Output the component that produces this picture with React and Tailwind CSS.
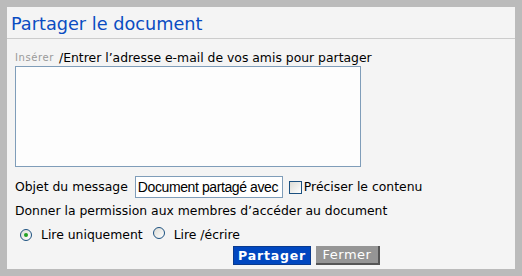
import React from 'react';

function Radio({ checked }) {
  return (
    <span className="relative inline-block w-[12px] h-[12px] rounded-full border border-[#1c5180] bg-gradient-to-br from-[#dcdcd6] to-white">
      {checked && <span className="absolute left-[3px] top-[3px] w-[4px] h-[4px] rounded-full bg-[#21a121]" />}
    </span>
  );
}

export default function App() {
  return (
    <div className="w-[522px] h-[276px] bg-[#bbbbbb] p-[7px]" style={{ fontFamily: '"DejaVu Sans", Verdana, sans-serif' }}>
      <div className="h-full bg-[#f4f4f4] flex flex-col">
        <div className="h-[32px] border-b border-[#cccccc] pl-[4px] pt-[6px]">
          <h1 className="text-[17.7px] leading-[22px] text-[#0a4cc2]">Partager le document</h1>
        </div>
        <div className="pl-[8px] pt-[12px] text-[12.4px] text-black">
          <div className="flex items-end leading-[14px]">
            <span className="text-[10px] tracking-[0.6px] text-[#999999] mr-[5px]">Insérer</span>
            <span>/Entrer l’adresse e-mail de vos amis pour partager</span>
          </div>
          <div className="w-[346px] h-[101px] border border-[#7f9db9] bg-[#fdfdfd] mt-[1px]" />
          <div className="flex items-center mt-[9px] h-[22px]">
            <span>Objet du message</span>
            <div className="ml-[7px] w-[148px] h-[22px] border border-[#7f9db9] bg-white pl-[2px] flex items-center overflow-hidden whitespace-nowrap text-[14px] tracking-[-0.4px]" style={{ fontFamily: '"Liberation Sans", Arial, sans-serif' }}>
              Document partagé avec
            </div>
            <span className="ml-[6px] w-[13px] h-[13px] border border-[#1c5180] bg-gradient-to-br from-[#dcdcd6] to-white" />
            <span className="ml-[2px]">Préciser le contenu</span>
          </div>
          <div className="mt-[6px] leading-[14px]">Donner la permission aux membres d’accéder au document</div>
          <div className="flex items-center mt-[9px] pl-[5px] leading-[14px]">
            <Radio checked />
            <span className="ml-[9px]">Lire uniquement</span>
            <span className="ml-[10px]"><Radio /></span>
            <span className="ml-[9px]">Lire /écrire</span>
          </div>
          <div className="flex mt-[4px] pl-[218px] gap-[5px]">
            <button className="w-[78px] h-[19px] bg-[#0047c0] border border-[#0a3a8e] text-white font-bold text-[12.5px] leading-[17px] tracking-[0.8px]">Partager</button>
            <button className="w-[64px] h-[19px] bg-[#959595] border-r-2 border-b-2 border-[#555555] text-white text-[13px] leading-[17px] tracking-[0.5px]">Fermer</button>
          </div>
        </div>
      </div>
    </div>
  );
}
